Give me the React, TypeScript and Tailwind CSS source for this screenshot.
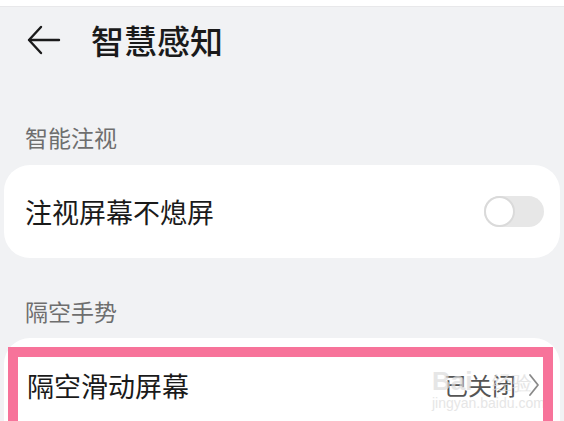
import React from "react";

const font = { fontFamily: '"Noto Sans CJK SC", "Noto Sans", sans-serif' };

function BackArrow() {
  return (
    <svg width="34" height="30" viewBox="0 0 34 30" fill="none" className="shrink-0">
      <path d="M14 2 L2 15 L14 28" stroke="#1a1a1a" strokeWidth="2.4" strokeLinecap="round" strokeLinejoin="round" />
      <path d="M2.5 15 H32" stroke="#1a1a1a" strokeWidth="2.4" strokeLinecap="round" />
    </svg>
  );
}

function Toggle() {
  return (
    <div className="flex h-[31px] w-[60px] items-center rounded-full bg-[#e7e7e7]">
      <div className="h-[31px] w-[31px] rounded-full border-2 border-[#dadada] bg-white" />
    </div>
  );
}

function Chevron() {
  return (
    <svg width="12" height="24" viewBox="0 0 12 24" fill="none" className="shrink-0">
      <path d="M2 2 L10 12 L2 22" stroke="#8a8a8a" strokeWidth="1.8" strokeLinecap="round" strokeLinejoin="round" />
    </svg>
  );
}

export default function App() {
  return (
    <div className="h-[421px] w-[564px] overflow-hidden bg-[#f1f2f4]" style={font}>
      <div className="h-[7px] border-b border-[#e8e8ea] bg-white" />

      {/* Header */}
      <div className="flex h-[66px] items-center pl-[27px]">
        <BackArrow />
        <h1 className="ml-[30px] text-[33px] font-medium leading-none text-[#1a1a1a]">智慧感知</h1>
      </div>

      {/* 智能注视 */}
      <p className="mt-[49px] pl-[25px] text-[23px] leading-[30px] text-[#6e6e6e]">智能注视</p>
      <div className="mx-[4px] mt-[13px] flex h-[93px] items-center justify-between rounded-[26px] bg-white pl-[21px] pr-[16px]">
        <span className="text-[27px] leading-none text-[#1a1a1a]">注视屏幕不熄屏</span>
        <Toggle />
      </div>

      {/* 隔空手势 */}
      <p className="mt-[38px] pl-[25px] text-[23px] leading-[30px] text-[#6e6e6e]">隔空手势</p>
      <div className="relative mx-[4px] mt-[12px] h-[120px] rounded-t-[26px] bg-white">
        <div className="flex h-[94px] items-center justify-between pl-[23px] pr-[20px]">
          <span className="text-[27px] leading-none text-[#1a1a1a]">隔空滑动屏幕</span>
          <div className="flex items-center gap-[12px]">
            <span className="text-[24px] leading-none text-[#555555]">已关闭</span>
            <Chevron />
          </div>
        </div>

        {/* watermark */}
        <div className="pointer-events-none absolute left-[428px] top-[30px] flex flex-col items-start leading-none text-[#dcdcdc] opacity-70">
          <span className="text-[26px] font-bold" style={{ fontFamily: '"Liberation Sans", sans-serif' }}>
            Bai<span className="text-[20px] font-normal">　经验</span>
          </span>
          <span className="mt-[2px] text-[14px]" style={{ fontFamily: '"Liberation Sans", sans-serif' }}>
            jingyan.baidu.com
          </span>
        </div>

        {/* highlight annotation */}
        <div className="pointer-events-none absolute left-[4px] top-[9px] h-[140px] w-[545px] border-[10px] border-[#f7739a]" />
      </div>
    </div>
  );
}
